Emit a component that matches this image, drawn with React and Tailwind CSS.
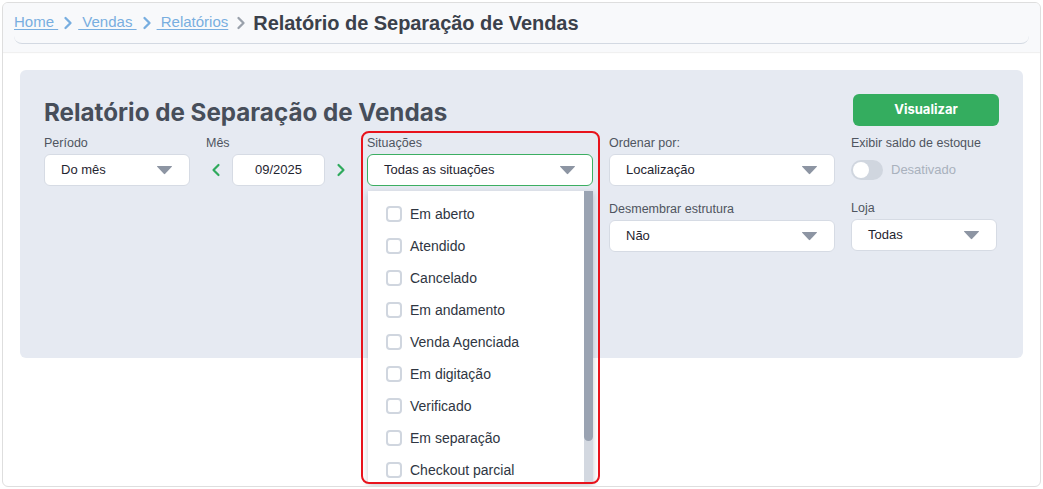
import React from "react";
import { ChevronLeft, ChevronRight } from "lucide-react";

const situacoes = [
  "Em aberto",
  "Atendido",
  "Cancelado",
  "Em andamento",
  "Venda Agenciada",
  "Em digitação",
  "Verificado",
  "Em separação",
  "Checkout parcial",
];

function Caret() {
  return (
    <svg width="17" height="10" viewBox="0 0 17 10" className="shrink-0">
      <path d="M1.5 1 L15.5 1 Q16.5 1 15.8 1.8 L9.2 8.8 Q8.5 9.5 7.8 8.8 L1.2 1.8 Q0.5 1 1.5 1 Z" fill="#8d95a3" />
    </svg>
  );
}

function Select({ value, className = "", active = false }) {
  return (
    <div
      className={`flex h-8 items-center justify-between rounded-md bg-white pl-4 pr-4 text-[13px] text-[#1f2530] ${
        active ? "border border-[#3cae62]" : "border border-[#d6dbe4]"
      } ${className}`}
    >
      <span>{value}</span>
      <Caret />
    </div>
  );
}

function Label({ children, className = "" }) {
  return <div className={`mb-[3px] text-[12.5px] leading-4 text-[#4f5560] ${className}`}>{children}</div>;
}

export default function App() {
  return (
    <div className="h-[489px] w-[1043px] bg-white p-[2px]" style={{ fontFamily: "'Liberation Sans', Arial, sans-serif" }}>
      <div className="relative flex h-[485px] flex-col overflow-hidden rounded-md border border-[#dedede] bg-white">
        {/* Header / breadcrumb */}
        <div className="bg-[#f8f9fb] px-[11px] pb-[8px] shadow-[0_1px_1px_rgba(0,0,0,0.06)]">
          <div className="flex h-[41px] items-center rounded-b-lg border-b border-[#d3d9e2] pb-[1px] text-[15px]">
            <a className="text-[#78aee0] underline decoration-1 underline-offset-2">Home&nbsp;</a>
            <ChevronRight size={20} strokeWidth={2.8} className="text-[#78aee0]" />
            <a className="text-[#78aee0] underline decoration-1 underline-offset-2">&nbsp;Vendas&nbsp;</a>
            <ChevronRight size={20} strokeWidth={2.8} className="text-[#78aee0]" />
            <a className="text-[#78aee0] underline decoration-1 underline-offset-2">&nbsp;Relatórios</a>
            <ChevronRight size={20} strokeWidth={2.8} className="ml-[3px] text-[#9aa1ab]" />
            <h1 className="ml-[2px] text-[20px] font-bold tracking-[-0.05px] text-[#3b414b]">Relatório de Separação de Vendas</h1>
          </div>
        </div>

        {/* Content */}
        <div className="px-[17px] pt-[18px]">
          <div className="h-[288px] rounded-md bg-[#e6eaf2] px-6 pt-6">
            <div className="flex h-8 items-center justify-between">
              <h2
                className="pt-[6px] text-[24.2px] font-bold text-[#474e5a]"
                style={{ fontFamily: "Inter, 'Noto Sans', sans-serif" }}
              >
                Relatório de Separação de Vendas
              </h2>
              <button
                className="h-8 w-[146px] rounded-md bg-[#34ad5f] text-[13px] font-bold text-white"
                style={{ fontFamily: "Inter, 'Noto Sans', sans-serif" }}
              >
                Visualizar
              </button>
            </div>

            <div className="mt-[9px] flex gap-4">
              <div className="w-[146px]">
                <Label>Período</Label>
                <Select value="Do mês" />
              </div>

              <div className="w-[145px]">
                <Label>Mês</Label>
                <div className="flex items-center gap-[6px]">
                  <ChevronLeft size={20} strokeWidth={2.6} className="text-[#2eaa5c]" />
                  <div className="flex h-8 w-[93px] items-center justify-center rounded-md border border-[#d6dbe4] bg-white text-[13px] text-[#1f2530]">
                    09/2025
                  </div>
                  <ChevronRight size={20} strokeWidth={2.6} className="text-[#2eaa5c]" />
                </div>
              </div>

              <div className="w-[226px]">
                <Label>Situações</Label>
                <Select value="Todas as situações" active />
              </div>

              <div className="w-[226px]">
                <Label>Ordenar por:</Label>
                <Select value="Localização" />
                <Label className="mt-[15px]">Desmembrar estrutura</Label>
                <Select value="Não" />
              </div>

              <div className="w-[146px]">
                <Label>Exibir saldo de estoque</Label>
                <div className="flex h-8 items-center gap-2 pb-[1px]">
                  <div className="flex h-5 w-8 items-center rounded-full bg-[#d0d6df] px-[2px]">
                    <div className="h-4 w-4 rounded-full bg-white" />
                  </div>
                  <span className="text-[13px] text-[#a9b1bd]">Desativado</span>
                </div>
                <Label className="mt-[14px]">Loja</Label>
                <Select value="Todas" />
              </div>
            </div>
          </div>
        </div>

        {/* Open dropdown for Situações */}
        <div className="absolute left-[365px] top-[188px] h-[293px] w-[225px] overflow-hidden bg-white shadow-[0_2px_6px_rgba(40,50,70,0.25)]">
          <div className="pr-[10px] pt-[7px]">
            {situacoes.map((s) => (
              <div key={s} className="flex h-8 items-center gap-[8px] pl-[18px] text-[14px] text-[#2f3642]">
                <span className="h-4 w-4 rounded-[4px] border-2 border-[#d0d6df] bg-white" />
                <span>{s}</span>
              </div>
            ))}
          </div>
          <div className="absolute right-0 top-0 h-full w-[9px] bg-[#d3d8e0]">
            <div className="h-[250px] w-full rounded-b-full bg-[#9aa3b2]" />
          </div>
        </div>

        {/* Highlight annotation */}
        <div className="pointer-events-none absolute left-[358px] top-[128px] h-[353px] w-[239px] rounded-lg border-2 border-[#e8131c]" />
      </div>
    </div>
  );
}
